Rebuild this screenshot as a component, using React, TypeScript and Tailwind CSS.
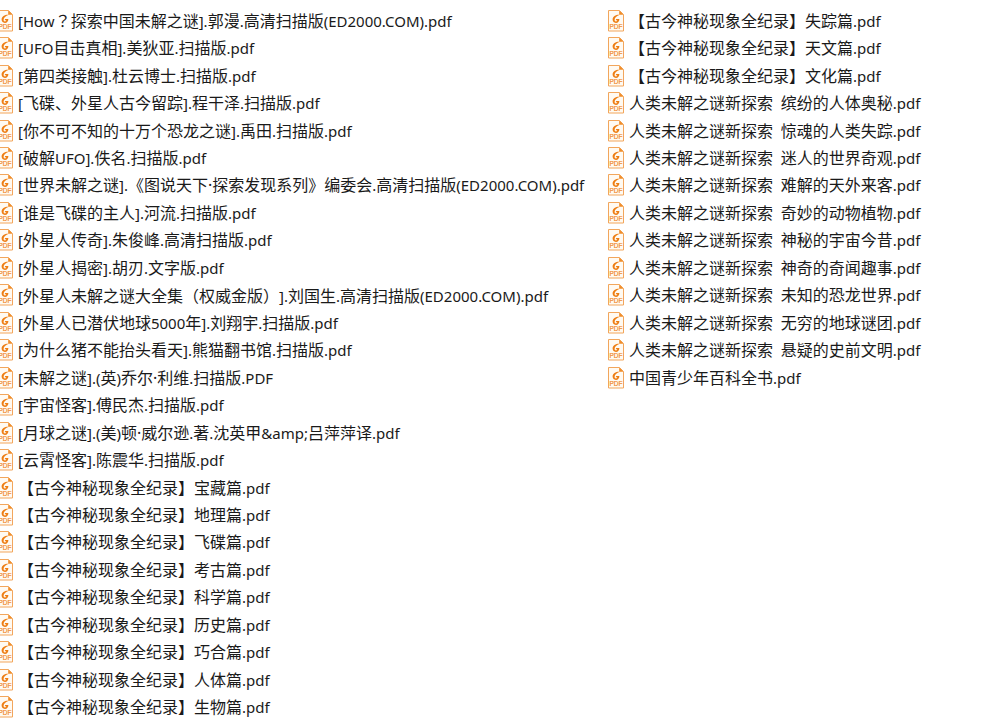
const files: string[] = [
  "[How？探索中国未解之谜].郭漫.高清扫描版(ED2000.COM).pdf",
  "[UFO目击真相].美狄亚.扫描版.pdf",
  "[第四类接触].杜云博士.扫描版.pdf",
  "[飞碟、外星人古今留踪].程干泽.扫描版.pdf",
  "[你不可不知的十万个恐龙之谜].禹田.扫描版.pdf",
  "[破解UFO].佚名.扫描版.pdf",
  "[世界未解之谜].《图说天下·探索发现系列》编委会.高清扫描版(ED2000.COM).pdf",
  "[谁是飞碟的主人].河流.扫描版.pdf",
  "[外星人传奇].朱俊峰.高清扫描版.pdf",
  "[外星人揭密].胡刃.文字版.pdf",
  "[外星人未解之谜大全集（权威金版）].刘国生.高清扫描版(ED2000.COM).pdf",
  "[外星人已潜伏地球5000年].刘翔宇.扫描版.pdf",
  "[为什么猪不能抬头看天].熊猫翻书馆.扫描版.pdf",
  "[未解之谜].(英)乔尔·利维.扫描版.PDF",
  "[宇宙怪客].傅民杰.扫描版.pdf",
  "[月球之谜].(美)顿·威尔逊.著.沈英甲&amp;吕萍萍译.pdf",
  "[云霄怪客].陈震华.扫描版.pdf",
  "【古今神秘现象全纪录】宝藏篇.pdf",
  "【古今神秘现象全纪录】地理篇.pdf",
  "【古今神秘现象全纪录】飞碟篇.pdf",
  "【古今神秘现象全纪录】考古篇.pdf",
  "【古今神秘现象全纪录】科学篇.pdf",
  "【古今神秘现象全纪录】历史篇.pdf",
  "【古今神秘现象全纪录】巧合篇.pdf",
  "【古今神秘现象全纪录】人体篇.pdf",
  "【古今神秘现象全纪录】生物篇.pdf",
  "【古今神秘现象全纪录】失踪篇.pdf",
  "【古今神秘现象全纪录】天文篇.pdf",
  "【古今神秘现象全纪录】文化篇.pdf",
  "人类未解之谜新探索  缤纷的人体奥秘.pdf",
  "人类未解之谜新探索  惊魂的人类失踪.pdf",
  "人类未解之谜新探索  迷人的世界奇观.pdf",
  "人类未解之谜新探索  难解的天外来客.pdf",
  "人类未解之谜新探索  奇妙的动物植物.pdf",
  "人类未解之谜新探索  神秘的宇宙今昔.pdf",
  "人类未解之谜新探索  神奇的奇闻趣事.pdf",
  "人类未解之谜新探索  未知的恐龙世界.pdf",
  "人类未解之谜新探索  无穷的地球谜团.pdf",
  "人类未解之谜新探索  悬疑的史前文明.pdf",
  "中国青少年百科全书.pdf",
];

function PdfIcon() {
  return (
    <svg viewBox="0 0 16 22" className="h-[22px] w-4 shrink-0" aria-hidden="true">
      <path d="M.5 .5H11.5L15.5 4.5V21H.5Z" fill="#fffaf2" stroke="#f2a65c" />
      <path d="M11.2 .5V4.8H15.5Z" fill="#f08c28" />
      <path
        d="M11.8 4.8C8 4.5 4.6 6.4 4.6 9.6C4.6 11.6 6 12.9 7.9 12.9C10.1 12.9 11.4 11.2 11.4 8.9H8.2L7.7 10.2H9.3C9 11 8.6 11.4 7.9 11.4C7.1 11.4 6.6 10.8 6.6 9.8C6.6 7.5 8.6 6.2 11.8 4.8Z"
        fill="#ee7d12"
      />
      <text
        x="8"
        y="19"
        textAnchor="middle"
        fontSize="6.5"
        fill="#f08c30"
        stroke="#f08c30"
        strokeWidth=".2"
        className="font-['Liberation_Sans',sans-serif]"
      >
        PDF
      </text>
    </svg>
  );
}

// Latin runs are set one step smaller than the Chinese characters beside them;
// full-width parentheses and question marks sit in the middle of their cell.
function FileName({ name }: { name: string }) {
  return (
    <span className="whitespace-pre [text-spacing-trim:space-all]">
      {name.split(/([（）？]|[\x20-\x7e]+)/).map((part, i) => {
        if (i % 2 === 0) return part;
        return /[（）？]/.test(part) ? (
          <span key={i} lang="zh-TW" className="font-['Noto_Sans_CJK_TC',sans-serif]">
            {part}
          </span>
        ) : (
          <span key={i} className="text-[15px]">
            {part}
          </span>
        );
      })}
    </span>
  );
}

export default function App() {
  return (
    <main lang="zh-CN" className="grid min-h-screen overflow-hidden bg-white">
      <ul className="-ml-[3px] grid grid-flow-col grid-cols-[minmax(0,611fr)_minmax(0,392fr)] grid-rows-[repeat(26,minmax(24px,1fr))] pt-[7px] pb-1 font-['Noto_Sans','Noto_Sans_CJK_SC',sans-serif] text-base leading-6 text-[#1a1a1a]">
        {files.map((name) => (
          <li key={name} className="flex min-w-0 items-center gap-[5px]">
            <PdfIcon />
            <FileName name={name} />
          </li>
        ))}
      </ul>
    </main>
  );
}
